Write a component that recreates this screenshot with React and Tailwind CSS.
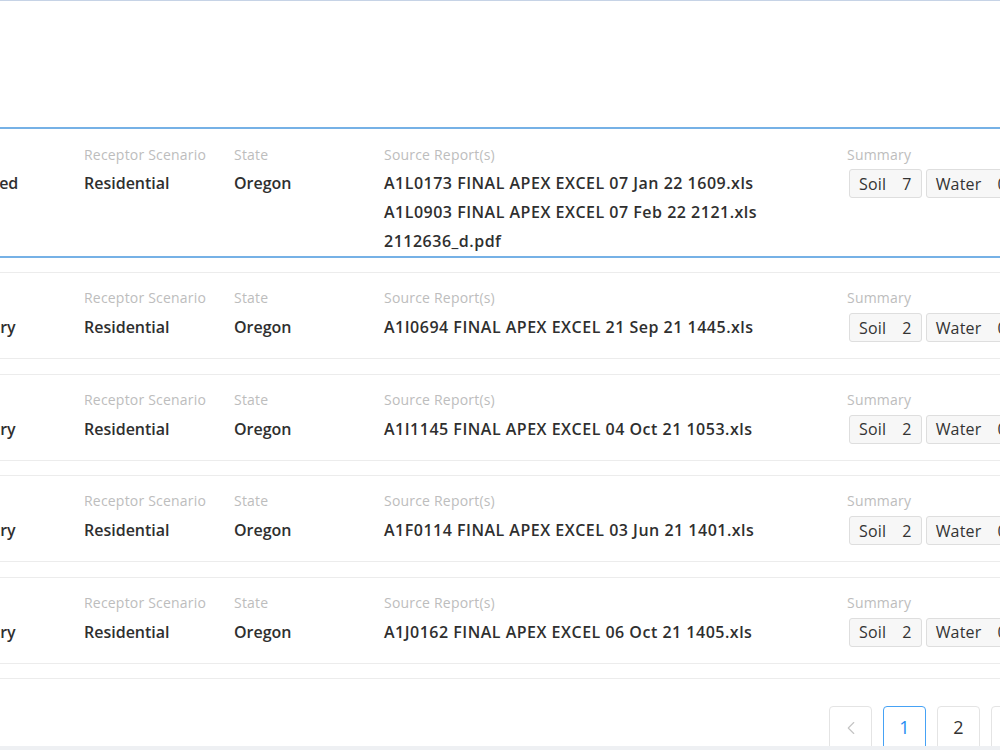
import React from "react";
import { ChevronLeft } from "lucide-react";

const rows = [
  {
    status: "Completed",
    files: [
      "A1L0173 FINAL APEX EXCEL 07 Jan 22 1609.xls",
      "A1L0903 FINAL APEX EXCEL 07 Feb 22 2121.xls",
      "2112636_d.pdf",
    ],
    soil: 7,
    selected: true,
  },
  { status: "Data Entry", files: ["A1I0694 FINAL APEX EXCEL 21 Sep 21 1445.xls"], soil: 2 },
  { status: "Data Entry", files: ["A1I1145 FINAL APEX EXCEL 04 Oct 21 1053.xls"], soil: 2 },
  { status: "Data Entry", files: ["A1F0114 FINAL APEX EXCEL 03 Jun 21 1401.xls"], soil: 2 },
  { status: "Data Entry", files: ["A1J0162 FINAL APEX EXCEL 06 Oct 21 1405.xls"], soil: 2 },
];

function Field({ label, children, className, valueClass }) {
  return (
    <div className={className}>
      <div className="text-[14px] leading-[20px] tracking-[0.2px] text-[#bdbdbd]">{label}</div>
      <div className={`text-[16px] font-semibold text-[#2f2f2f] ${valueClass}`}>{children}</div>
    </div>
  );
}

function Badge({ name, count }) {
  return (
    <div className="flex h-[29px] items-center gap-[16px] rounded-[3px] border border-[#dedede] bg-[#f7f7f7] px-[9px] text-[16px] font-normal tracking-[0.2px] text-[#333333]">
      <span>{name}</span>
      <span>{count}</span>
    </div>
  );
}

function Card({ row, className }) {
  const sel = row.selected;
  const border = sel
    ? "border-2 border-[#76b1e6] pt-[16px] pb-0 pl-[15px]"
    : "border border-[#ececec] pt-[15px] pb-[15.5px] pl-4";
  const vc = sel ? "mt-[4px] leading-[29px]" : "mt-[5px] leading-[29.5px]";
  return (
    <div className={`flex bg-white ${border} ${className}`}>
      <Field label="Status" className="w-[150px] shrink-0" valueClass={vc}>
        {row.status}
      </Field>
      <Field label="Receptor Scenario" className="w-[150px] shrink-0" valueClass={vc}>
        Residential
      </Field>
      <Field label="State" className="w-[150px] shrink-0" valueClass={vc}>
        Oregon
      </Field>
      <Field
        label="Source Report(s)"
        className="w-[463px] shrink-0"
        valueClass={`${vc} tracking-[0.5px]`}
      >
        {row.files.map((f) => (
          <div key={f}>{f}</div>
        ))}
      </Field>
      <div className="shrink-0">
        <div className="text-[14px] leading-[20px] tracking-[0.2px] text-[#bdbdbd]">Summary</div>
        <div className={`${sel ? "mt-[4px] h-[29px]" : "mt-[5px] h-[29.5px]"} flex items-center gap-[4px] pl-[2px]`}>
          <Badge name="Soil" count={row.soil} />
          <Badge name="Water" count={0} />
          <Badge name="Air" count={0} />
        </div>
      </div>
    </div>
  );
}

function PageButton({ children, active, muted }) {
  const cls = active
    ? "border-[#46a2f5] text-[#1c8cf2]"
    : muted
    ? "border-[#e4e4e4] text-[#c4c4c4]"
    : "border-[#e4e4e4] text-[#333333]";
  return (
    <div
      className={`flex h-[44px] w-[43px] shrink-0 items-center justify-center rounded-[4px] border bg-white text-[18px] ${cls}`}
    >
      {children}
    </div>
  );
}

export default function App() {
  return (
    <div className="flex h-[750px] w-[1000px] flex-col overflow-hidden bg-white font-['Open_Sans','Noto_Sans',sans-serif]">
      <div className="flex-1 overflow-hidden border-t border-[#c6d3e6]">
        <div className="h-[126px]" />
        <div className="ml-[-83px] flex w-[1300px] flex-col">
          {rows.map((r, i) => (
            <Card
              key={i}
              row={r}
              className={i === 0 ? "" : i === 1 ? "mt-[14px]" : "mt-[14.5px]"}
            />
          ))}
        </div>
        <div className="mt-[14px] border-t border-[#ececec]" />
        <div className="mt-[27px] flex gap-[11px] pl-[829px]">
          <PageButton muted>
            <ChevronLeft size={22} strokeWidth={1.25} />
          </PageButton>
          <PageButton active>1</PageButton>
          <PageButton>2</PageButton>
          <PageButton>3</PageButton>
        </div>
      </div>
      <div className="h-[4px] shrink-0 bg-[#eef0f3]" />
    </div>
  );
}
